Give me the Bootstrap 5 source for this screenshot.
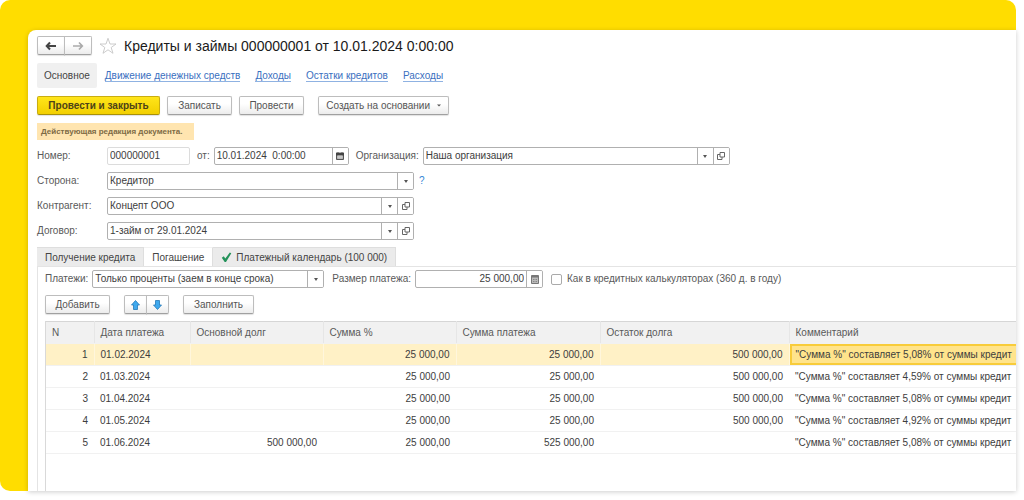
<!DOCTYPE html>
<html lang="ru">
<head>
<meta charset="utf-8">
<meta name="viewport" content="width=device-width, initial-scale=1">
<title>Кредиты и займы</title>
<link href="https://cdn.jsdelivr.net/npm/bootstrap@5.3.0/dist/css/bootstrap.min.css" rel="stylesheet">
<style>
  body { font-family: "Liberation Sans", Arial, sans-serif; font-size: 10px; line-height: 14px; color: #595959; background: #fff; }
  .page { min-height: 100vh; padding: 0 8px 9px 0; }
  .backdrop { background: #ffdd00; border-radius: 10px 10px 0 10px; padding: 30px 0 0 28px; }
  .sheet { background: #fff; border-radius: 8px 0 0 0; box-shadow: 0 1px 5px rgba(0,0,0,.2); padding: 6px 0 0 9px; min-width: 0; }
  h1 { font-size: 14px; line-height: 18px; color: #1a1a1a; font-weight: 400; }

  .cmd { font-size: 10px; line-height: 14px; height: 19px; padding: 0; color: #555; border: 1px solid #bdbdbd; border-bottom-color: #a0a0a0; border-radius: 2px; background: linear-gradient(#fff 40%, #ececec); box-shadow: 0 1px 1px rgba(0,0,0,.12); white-space: nowrap; }
  .cmd:hover { color: #333; border-color: #999; }
  .cmd-main { width: 123px; font-weight: 700; color: #4d4318; background: linear-gradient(#ffe51a, #f2cf00); border-color: #c9ad10; border-bottom-color: #a89008; }
  .cmd-icon { width: 28px; display: flex; align-items: center; justify-content: center; }
  .cmd-move { width: 23px; display: flex; align-items: center; justify-content: center; }
  .w-write { width: 65px; }
  .w-base { width: 131px; }
  .w-fill { width: 71px; }
  .gap-near { column-gap: 7px; }
  .gap-far { column-gap: 14px; }

  .sections { column-gap: 15px; }
  .sections .nav-link { padding: 0; color: #3a6fc0; border-bottom: 1px solid #8fb2e2; line-height: 11px; }
  .sections .active { color: #444; background: #f0f0f0; border: 0; border-radius: 2px; line-height: 25px; padding: 0 7px; margin-right: -7px; }
  .notice { background: #ffe5b0; color: #7d6a45; font-size: 8px; line-height: 17px; font-weight: 700; padding: 0 4px; width: 157px; white-space: nowrap; }

  .fields { row-gap: 7px; margin-top: 7px; }
  .caption { width: 70px; flex: none; }
  .box { height: 18px; border: 1px solid #b0b0b0; border-radius: 2px; background: #fff; overflow: hidden; }
  .box-locked { border-color: #dcdcdc; }
  .box .form-control, .box .form-select { font-size: 10px; line-height: 16px; min-height: 0; height: 16px; padding: 0 2px; border: 0; border-radius: 0; color: #3d3d3d; background: none; flex: 1 1 0; min-width: 0; width: auto; }
  .box button, .drop { width: 16px; flex: none; padding: 0; border: 0; border-left: 1px solid #b0b0b0; background: #fff; display: flex; align-items: center; justify-content: center; color: #595959; }
  .w-number { width: 83px; }
  .w-date { width: 135px; }
  .w-party { width: 307px; }
  .w-plan { width: 232px; }
  .w-sum { width: 128px; }
  .hint { color: #3787d6; margin-left: 5px; }

  .pages { border-bottom: 1px solid #e4e4e4; margin-top: 7px; }
  .pages .nav-link { font-size: 10px; line-height: 19px; height: 19px; padding: 0 8px; border: 0; border-top: 1px solid #dedede; border-right: 1px solid #dedede; border-radius: 0; background: #ebebeb; color: #444; white-space: nowrap; }
  .pages .nav-link.active { background: #fff; border-top-color: #f2f2f2; }
  .pane { border-left: 1px solid #e4e4e4; padding: 3px 0 0 7px; }
  .pane .form-check-input { width: 11px; height: 11px; margin: 0 5px 0 8px; border-radius: 2px; border-color: #aaa; float: none; }
  .toolbar { margin-top: 7px; }

  .grid-area { border-left: 1px solid #d9d9d9; margin-top: 7px; overflow: hidden; padding-bottom: 36px; }
  .grid { table-layout: fixed; width: 100%; margin: 0; color: #3d3d3d; border-top: 1px solid #d6d6d6; }
  .grid th, .grid td { padding: 0 6px; height: 22px; line-height: 21px; white-space: nowrap; border: 0; border-bottom: 1px solid #f1f1f1; }
  .grid th { font-weight: 400; color: #595959; background: #f1f1f1; border-right: 1px solid #e6e6e6; }
  .grid th:last-child { border-right: 0; }
  .grid .num { text-align: right; }
  .grid .current td { background: #fff1c6; border-right: 1px solid #fff6dc; }
  .grid .current td.cell { background: #ffe48c; box-shadow: inset 2px 2px #f8cc3a, inset 0 -2px #f8cc3a; border-right: 0; }
</style>
</head>
<body>
<div class="page d-flex">
  <div class="backdrop d-flex flex-grow-1 w-100">
    <main class="sheet flex-grow-1 d-flex flex-column">

      <header class="d-flex align-items-center gap-near">
        <div class="btn-group" role="group" aria-label="История">
          <button class="btn cmd cmd-icon" type="button" aria-label="Назад"><svg width="12" height="10" viewBox="0 0 12 10"><path d="M5 1.500 1.700 5 5 8.500M2 5h9" fill="none" stroke="#444" stroke-width="2"/></svg></button>
          <button class="btn cmd cmd-icon" type="button" aria-label="Вперед"><svg width="12" height="10" viewBox="0 0 12 10"><path d="M7 1.500 10.300 5 7 8.500M10 5H1" fill="none" stroke="#aaa" stroke-width="1.700"/></svg></button>
        </div>
        <svg width="18" height="18" viewBox="0 0 18 18" aria-hidden="true"><path d="M9 1.300 11 7h6l-4.800 3.500L14 16.300 9 12.800l-5 3.500 1.800-5.800L1 7h6z" fill="#fff" stroke="#c6c6c6" stroke-width=".9"/></svg>
        <h1 class="mb-0 text-nowrap">Кредиты и займы 000000001 от 10.01.2024 0:00:00</h1>
      </header>

      <nav class="sections nav align-items-center mt-2 pb-2">
        <a class="nav-link active" href="#">Основное</a>
        <a class="nav-link" href="#">Движение денежных средств</a>
        <a class="nav-link" href="#">Доходы</a>
        <a class="nav-link" href="#">Остатки кредитов</a>
        <a class="nav-link" href="#">Расходы</a>
      </nav>

      <div class="d-flex gap-far">
        <div class="d-flex gap-near">
          <button class="btn cmd cmd-main" type="button">Провести и закрыть</button>
          <button class="btn cmd w-write" type="button">Записать</button>
          <button class="btn cmd w-write" type="button">Провести</button>
        </div>
        <button class="btn cmd w-base" type="button">Создать на основании <svg class="ms-1" width="4" height="3" viewBox="0 0 4 3"><path d="M0 .5h4L2 2.500z" fill="#555"/></svg></button>
      </div>

      <div class="notice mt-2">Действующая редакция документа.</div>

      <form class="fields d-flex flex-column">
        <div class="d-flex align-items-center gap-near">
          <div class="d-flex align-items-center">
            <label class="caption" for="number">Номер:</label>
            <div class="box box-locked w-number d-flex"><input class="form-control" id="number" value="000000001" readonly></div>
          </div>
          <div class="d-flex align-items-center">
            <label class="me-1" for="date">от:</label>
            <div class="box w-date d-flex"><input class="form-control" id="date" value="10.01.2024  0:00:00"><button type="button" aria-label="Календарь"><svg width="8" height="8" viewBox="0 0 8 8"><path d="M.5 1.500h7v6h-7z" fill="#aaa" stroke="#555"/><path d="M0 1h8v2H0zM2 0v2M6 0v2" fill="#444" stroke="#444" stroke-width=".8"/><path d="M1 5h6M3 3v4M5 3v4" stroke="#eee" stroke-width=".5"/></svg></button></div>
          </div>
          <div class="d-flex align-items-center">
            <label class="me-1" for="org">Организация:</label>
            <div class="box w-party d-flex"><select class="form-select" id="org"><option>Наша организация</option></select><span class="drop"><svg width="4" height="3" viewBox="0 0 4 3"><path d="M0 0h4L2 3z" fill="#555"/></svg></span><button type="button" aria-label="Открыть"><svg width="8" height="8" viewBox="0 0 8 8" fill="none" stroke="#666"><path d="M3 .5h4.500V5H3zM3 2.500H.5v5H5V5"/></svg></button></div>
          </div>
        </div>
        <div class="d-flex align-items-center">
          <label class="caption" for="side">Сторона:</label>
          <div class="box w-party d-flex"><select class="form-select" id="side"><option>Кредитор</option></select><span class="drop"><svg width="4" height="3" viewBox="0 0 4 3"><path d="M0 0h4L2 3z" fill="#555"/></svg></span></div>
          <a class="hint text-decoration-none" href="#">?</a>
        </div>
        <div class="d-flex align-items-center">
          <label class="caption" for="partner">Контрагент:</label>
          <div class="box w-party d-flex"><select class="form-select" id="partner"><option>Концепт ООО</option></select><span class="drop"><svg width="4" height="3" viewBox="0 0 4 3"><path d="M0 0h4L2 3z" fill="#555"/></svg></span><button type="button" aria-label="Открыть"><svg width="8" height="8" viewBox="0 0 8 8" fill="none" stroke="#666"><path d="M3 .5h4.500V5H3zM3 2.500H.5v5H5V5"/></svg></button></div>
        </div>
        <div class="d-flex align-items-center">
          <label class="caption" for="contract">Договор:</label>
          <div class="box w-party d-flex"><select class="form-select" id="contract"><option>1-займ от 29.01.2024</option></select><span class="drop"><svg width="4" height="3" viewBox="0 0 4 3"><path d="M0 0h4L2 3z" fill="#555"/></svg></span><button type="button" aria-label="Открыть"><svg width="8" height="8" viewBox="0 0 8 8" fill="none" stroke="#666"><path d="M3 .5h4.500V5H3zM3 2.500H.5v5H5V5"/></svg></button></div>
        </div>
      </form>

      <div class="pages nav">
        <button class="nav-link" type="button">Получение кредита</button>
        <button class="nav-link active" type="button">Погашение</button>
        <button class="nav-link d-flex align-items-center" type="button"><svg class="me-1" width="11" height="11" viewBox="0 0 11 11"><path d="M.8 5.800 2.800 4.300 4.300 6.500 8.800.6l1.500.7L5 10H3.700z" fill="#23925a"/></svg>Платежный календарь (100 000)</button>
      </div>

      <section class="pane flex-grow-1 d-flex flex-column">
        <div class="d-flex align-items-center">
          <label class="me-1" for="plan">Платежи:</label>
          <div class="box w-plan d-flex"><select class="form-select" id="plan"><option>Только проценты (заем в конце срока)</option></select><span class="drop"><svg width="4" height="3" viewBox="0 0 4 3"><path d="M0 0h4L2 3z" fill="#555"/></svg></span></div>
          <label class="ms-2 me-1" for="amount">Размер платежа:</label>
          <div class="box w-sum d-flex"><input class="form-control text-end" id="amount" value="25 000,00"><button type="button" aria-label="Калькулятор"><svg width="8" height="9" viewBox="0 0 8 9"><path d="M.5.5h7v8h-7z" fill="#bbb" stroke="#777"/><path d="M1 1h6v1.500H1z" fill="#777"/><path d="M2 4.500h4M2 6.500h4" stroke="#888" stroke-dasharray="1 .5"/></svg></button></div>
          <input class="form-check-input" type="checkbox" id="calc">
          <label for="calc">Как в кредитных калькуляторах (360 д. в году)</label>
        </div>

        <div class="toolbar d-flex gap-far">
          <button class="btn cmd w-write" type="button">Добавить</button>
          <div class="btn-group" role="group" aria-label="Порядок строк">
            <button class="btn cmd cmd-move" type="button" aria-label="Вверх"><svg width="9" height="10" viewBox="0 0 9 10"><path d="M4.500.5 8.500 5h-2v4.500h-4V5h-2z" fill="#3fa9ee" stroke="#2478b8" stroke-width=".8"/></svg></button>
            <button class="btn cmd cmd-move" type="button" aria-label="Вниз"><svg width="9" height="10" viewBox="0 0 9 10"><path d="M4.500 9.500.5 5h2V.5h4V5h2z" fill="#3fa9ee" stroke="#2478b8" stroke-width=".8"/></svg></button>
          </div>
          <button class="btn cmd w-fill" type="button">Заполнить</button>
        </div>

        <div class="grid-area flex-grow-1">
          <table class="grid">
            <colgroup><col style="width:48px"><col style="width:96px"><col style="width:133px"><col style="width:133px"><col style="width:144px"><col style="width:189px"><col></colgroup>
            <thead><tr><th>N</th><th>Дата платежа</th><th>Основной долг</th><th>Сумма %</th><th>Сумма платежа</th><th>Остаток долга</th><th>Комментарий</th></tr></thead>
            <tbody>
              <tr class="current"><td class="num">1</td><td>01.02.2024</td><td></td><td class="num">25 000,00</td><td class="num">25 000,00</td><td class="num">500 000,00</td><td class="cell">"Сумма %" составляет 5,08% от суммы кредит</td></tr>
              <tr><td class="num">2</td><td>01.03.2024</td><td></td><td class="num">25 000,00</td><td class="num">25 000,00</td><td class="num">500 000,00</td><td>"Сумма %" составляет 4,59% от суммы кредит</td></tr>
              <tr><td class="num">3</td><td>01.04.2024</td><td></td><td class="num">25 000,00</td><td class="num">25 000,00</td><td class="num">500 000,00</td><td>"Сумма %" составляет 5,08% от суммы кредит</td></tr>
              <tr><td class="num">4</td><td>01.05.2024</td><td></td><td class="num">25 000,00</td><td class="num">25 000,00</td><td class="num">500 000,00</td><td>"Сумма %" составляет 4,92% от суммы кредит</td></tr>
              <tr><td class="num">5</td><td>01.06.2024</td><td class="num">500 000,00</td><td class="num">25 000,00</td><td class="num">525 000,00</td><td></td><td>"Сумма %" составляет 5,08% от суммы кредит</td></tr>
            </tbody>
          </table>
        </div>
      </section>
    </main>
  </div>
</div>
<script src="https://cdn.jsdelivr.net/npm/bootstrap@5.3.0/dist/js/bootstrap.bundle.min.js"></script>
</body>
</html>
